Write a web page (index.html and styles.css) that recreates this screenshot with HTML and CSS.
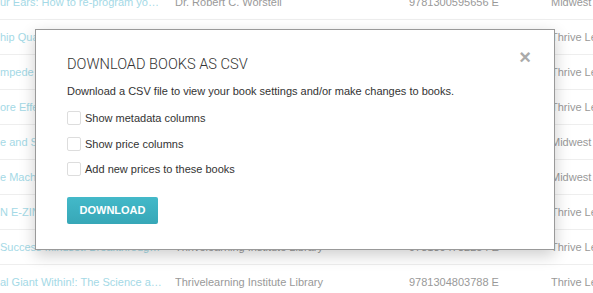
FILE: index.html
```html
<!DOCTYPE html>
<html lang="en">
<head>
  <meta charset="UTF-8" />
  <title>Books</title>
  <link rel="stylesheet" href="styles.css">
</head>
<body>
  <div class="books">
    <div class="row"><div class="title">ur Ears: How to re-program your mind for success</div><div class="cell">Dr. Robert C. Worstell</div><div class="cell">9781300595656 E</div><div class="cell">Midwest Journal Press</div></div>
    <div class="row"><div class="title">hip Quality and Personal Excellence</div><div class="cell">Thrivelearning Institute Library</div><div class="cell">9781304803801 E</div><div class="cell">Thrive Learning</div></div>
    <div class="row"><div class="title">mpede</div><div class="cell">Thrivelearning Institute Library</div><div class="cell">9781304803795 E</div><div class="cell">Thrive Learning</div></div>
    <div class="row"><div class="title">ore Effective Living</div><div class="cell">Thrivelearning Institute Library</div><div class="cell">9781304803771 E</div><div class="cell">Thrive Learning</div></div>
    <div class="row"><div class="title">e and Success</div><div class="cell">Dr. Robert C. Worstell</div><div class="cell">9781300595649 E</div><div class="cell">Midwest Journal Press</div></div>
    <div class="row"><div class="title">e Machine</div><div class="cell">Dr. Robert C. Worstell</div><div class="cell">9781300595632 E</div><div class="cell">Midwest Journal Press</div></div>
    <div class="row"><div class="title">N E-ZINE Collection</div><div class="cell">Thrivelearning Institute Library</div><div class="cell">9781304803764 E</div><div class="cell">Thrive Learning</div></div>
    <div class="row"><div class="title">Success Mindset: Breakthrough Wealth</div><div class="cell">Thrivelearning Institute Library</div><div class="cell">9781304782254 E</div><div class="cell">Thrive Learning</div></div>
    <div class="row"><div class="title">al Giant Within!: The Science and Art of Living</div><div class="cell">Thrivelearning Institute Library</div><div class="cell">9781304803788 E</div><div class="cell">Thrive Learning</div></div>
  </div>

  <div class="modal">
    <button class="close" type="button">&times;</button>
    <h3>DOWNLOAD BOOKS AS CSV</h3>
    <p>Download a CSV file to view your book settings and/or make changes to books.</p>
    <label class="check"><input type="checkbox"> Show metadata columns</label>
    <label class="check"><input type="checkbox"> Show price columns</label>
    <label class="check"><input type="checkbox"> Add new prices to these books</label>
    <button class="download" type="button">DOWNLOAD</button>
  </div>
</body>
</html>
```

FILE: styles.css
```css
body {
  margin: 0;
  font-family: "Liberation Sans", Arial, sans-serif;
  font-size: 11px;
  color: #333;
  background: #fff;
  overflow: hidden;
}
.books {
  margin-top: -15px;
}
.row {
  display: grid;
  grid-template-columns: 175px 234px 142px 1fr;
  height: 34px;
  align-items: center;
  border-bottom: 1px solid #eee;
  color: #999;
  font-size: 11px;
}
.title {
  color: #a4d9e6;
  padding-right: 11px;
  white-space: nowrap;
  overflow: hidden;
  text-overflow: ellipsis;
}
.cell {
  white-space: nowrap;
  overflow: hidden;
}
.modal {
  position: absolute;
  left: 35px;
  top: 29px;
  width: 487px;
  height: 197px;
  padding: 22px 0 0 31px;
  background: #fff;
  border: 1px solid #999;
  box-shadow: 0 5px 15px rgba(0, 0, 0, 0.2);
}
.modal h3 {
  margin: 0 0 7px;
  font-family: Roboto, sans-serif;
  font-weight: 300;
  font-size: 14.6px;
  line-height: 24px;
  color: #333;
}
.modal p {
  margin: 0 0 12px;
  line-height: 16px;
}
.check {
  display: flex;
  align-items: center;
  gap: 4px;
  height: 14px;
  margin-bottom: 11.5px;
}
.check input {
  appearance: none;
  margin: 0;
  width: 14px;
  height: 14px;
  border: 1px solid #ddd;
  border-radius: 2px;
  background: #fff;
}
.close {
  position: absolute;
  right: 23px;
  top: 17px;
  border: 0;
  padding: 0;
  background: none;
  font-family: "Liberation Sans", Arial, sans-serif;
  font-size: 20px;
  font-weight: bold;
  color: #aaa;
  line-height: 20px;
}
.download {
  margin-top: 9px;
  width: 91px;
  height: 27px;
  border: 0;
  border-radius: 2px;
  background: linear-gradient(#43b9c9, #37a7b7);
  color: #fff;
  font-family: "Liberation Sans", Arial, sans-serif;
  font-size: 11px;
  font-weight: bold;
  padding: 0;
}
```
